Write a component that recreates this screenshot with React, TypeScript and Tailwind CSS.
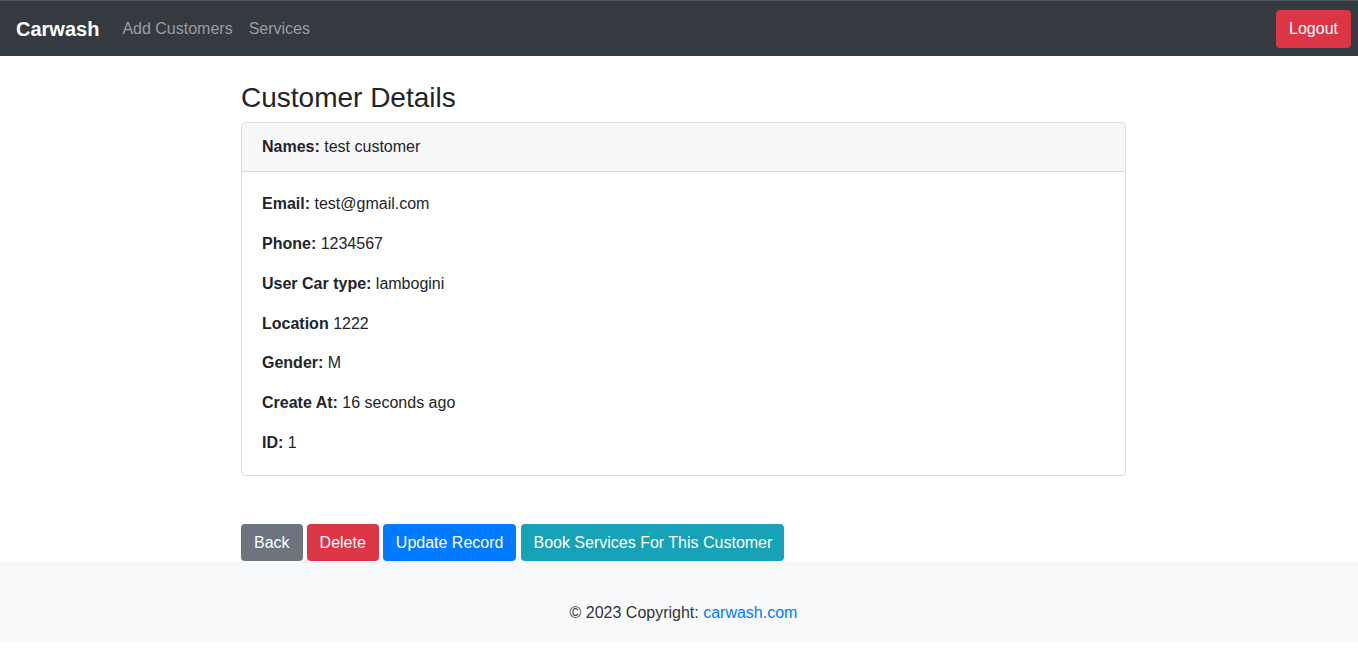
export default function App() {
  const fields: [string, string][] = [
    ["Email:", "test@gmail.com"],
    ["Phone:", "1234567"],
    ["User Car type:", "lambogini"],
    ["Location", "1222"],
    ["Gender:", "M"],
    ["Create At:", "16 seconds ago"],
    ["ID:", "1"],
  ];

  return (
    <div className="min-h-[671px] bg-white text-[#212529] font-['Liberation_Sans',Arial,sans-serif] text-base leading-6">
      {/* navbar */}
      <nav className="h-[56px] bg-[#343a40] border-t border-[#55595e] flex items-center pl-4 pr-[7px]">
        <a className="text-white text-xl font-bold leading-[30px] mr-[15px]">Carwash</a>
        <a className="text-[#9a9da0] px-2">Add Customers</a>
        <a className="text-[#9a9da0] px-2">Services</a>
        <button className="ml-auto bg-[#dc3545] text-white rounded px-[13px] h-[38px]">Logout</button>
      </nav>

      <main className="ml-[241px] w-[885px]">
        <h3 className="text-[28px] leading-[34px] mt-[25px] mb-[7px] font-normal">Customer Details</h3>

        <div className="border border-black/[0.125] rounded">
          <div className="bg-[#f7f7f7] border-b border-black/[0.125] px-5 py-3 rounded-t">
            <b>Names:</b> test customer
          </div>
          <div className="px-5 pt-5 pb-5 flex flex-col gap-[15.85px]">
            {fields.map(([label, value]) => (
              <p key={label}>
                <b>{label}</b> {value}
              </p>
            ))}
          </div>
        </div>

        <div className="mt-[48px] flex gap-1">
          <button className="bg-[#6c757d] text-white rounded px-[13px] h-[37px]">Back</button>
          <button className="bg-[#dc3545] text-white rounded px-[13px] h-[37px]">Delete</button>
          <button className="bg-[#007bff] text-white rounded px-[13px] h-[37px]">Update Record</button>
          <button className="bg-[#17a2b8] text-white rounded px-3 h-[37px] ml-[1px]">Book Services For This Customer</button>
        </div>
      </main>

      <footer className="bg-[#f8f9fa] h-[80px] pt-[40px] pl-[9px] text-center text-[#333]">
        © 2023 Copyright: <a className="text-[#007bff]">carwash.com</a>
      </footer>
    </div>
  );
}
